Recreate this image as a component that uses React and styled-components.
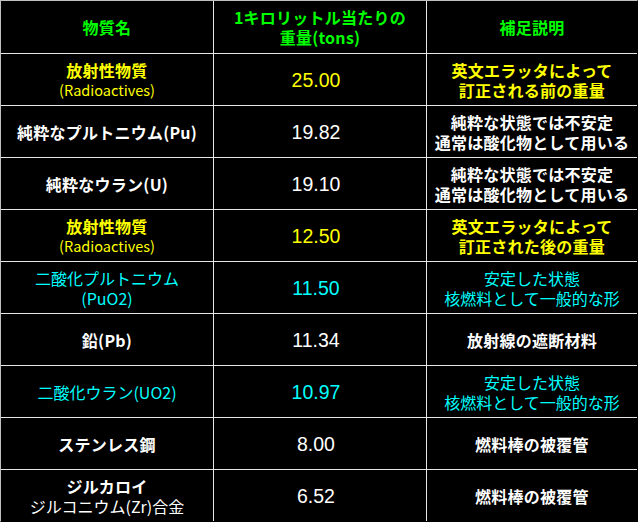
import styled, { createGlobalStyle } from "styled-components";

const GlobalStyle = createGlobalStyle`
  html, body {
    margin: 0;
    padding: 0;
    background: #fff;
  }
  body {
    font-family: "Noto Sans CJK JP", "Liberation Sans", sans-serif;
  }
`;

const COLORS = {
  green: "#00ff00",
  yellow: "#ffff00",
  cyan: "#00ffff",
  white: "#ffffff",
};

const rows = [
  {
    color: "yellow",
    name: "放射性物質",
    sub: "(Radioactives)",
    weight: "25.00",
    note: ["英文エラッタによって", "訂正される前の重量"],
    bold: true,
  },
  {
    color: "white",
    name: "純粋なプルトニウム(Pu)",
    weight: "19.82",
    note: ["純粋な状態では不安定", "通常は酸化物として用いる"],
    bold: true,
  },
  {
    color: "white",
    name: "純粋なウラン(U)",
    weight: "19.10",
    note: ["純粋な状態では不安定", "通常は酸化物として用いる"],
    bold: true,
  },
  {
    color: "yellow",
    name: "放射性物質",
    sub: "(Radioactives)",
    weight: "12.50",
    note: ["英文エラッタによって", "訂正された後の重量"],
    bold: true,
  },
  {
    color: "cyan",
    name: "二酸化プルトニウム",
    sub: "(PuO2)",
    weight: "11.50",
    note: ["安定した状態", "核燃料として一般的な形"],
    bold: false,
  },
  {
    color: "white",
    name: "鉛(Pb)",
    weight: "11.34",
    note: ["放射線の遮断材料"],
    bold: true,
  },
  {
    color: "cyan",
    name: "二酸化ウラン(UO2)",
    weight: "10.97",
    note: ["安定した状態", "核燃料として一般的な形"],
    bold: false,
  },
  {
    color: "white",
    name: "ステンレス鋼",
    weight: "8.00",
    note: ["燃料棒の被覆管"],
    bold: true,
  },
  {
    color: "white",
    name: "ジルカロイ",
    sub: "ジルコニウム(Zr)合金",
    weight: "6.52",
    note: ["燃料棒の被覆管"],
    bold: true,
  },
];

const App = () => {
  return (
    <>
      <GlobalStyle />
      <Table>
        <Cell $color="green" $bold>
          <Line>物質名</Line>
        </Cell>
        <Cell $color="green" $bold>
          <Line>1キロリットル当たりの</Line>
          <Line>重量(tons)</Line>
        </Cell>
        <Cell $color="green" $bold>
          <Line>補足説明</Line>
        </Cell>

        {rows.map((row, i) => (
          <Row key={i} row={row} />
        ))}
      </Table>
    </>
  );
};

const Row = ({ row }) => (
  <>
    <Cell $color={row.color} $bold={row.bold}>
      <Line>{row.name}</Line>
      {row.sub && <SubLine $small={row.sub.startsWith("(R")}>{row.sub}</SubLine>}
    </Cell>
    <Cell $color={row.color}>
      <Number>{row.weight}</Number>
    </Cell>
    <Cell $color={row.color} $bold={row.bold}>
      {row.note.map((n) => (
        <Line key={n}>{n}</Line>
      ))}
    </Cell>
  </>
);

export default App;

const Table = styled.div`
  display: grid;
  grid-template-columns: 212px 212px 210px;
  grid-template-rows: 52px repeat(9, 51px);
  gap: 1px;
  width: max-content;
  background: #e6e6e6;
  border-top: 1px solid #c0c0c0;
  border-left: 1px solid #c0c0c0;
  border-right: 1px solid #000;
  border-bottom: 1px solid #000;
`;

const Cell = styled.div`
  background: #000;
  color: ${({ $color }) => COLORS[$color]};
  font-weight: ${({ $bold }) => ($bold ? 700 : 400)};
  letter-spacing: ${({ $bold }) => ($bold ? "0.25px" : "0")};
  display: flex;
  flex-direction: column;
  align-items: center;
  justify-content: center;
  text-align: center;
  font-size: 16px;
  line-height: 20px;
  white-space: nowrap;
`;

const Line = styled.div``;

const SubLine = styled.div`
  font-weight: 400;
  letter-spacing: 0;
  font-size: ${({ $small }) => ($small ? "14.5px" : "16px")};
`;

const Number = styled.div`
  font-family: "Liberation Sans", Arial, sans-serif;
  font-weight: 400;
  letter-spacing: 0;
  font-size: 19.5px;
  margin-right: 8px;
`;
